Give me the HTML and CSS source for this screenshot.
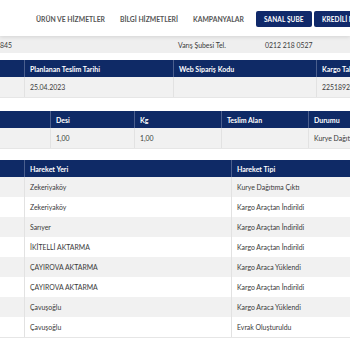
FILE: index.html
```html
<!DOCTYPE html>
<html lang="tr">

<head>
    <meta charset="UTF-8">
    <meta name="viewport" content="width=device-width, initial-scale=1.0">
    <title>Kargo Takip</title>
    <link rel="stylesheet" href="styles.css">
</head>

<body>
    <header class="topbar">
        <nav class="menu">
            <a href="#">ÜRÜN VE HİZMETLER</a>
            <a href="#">BİLGİ HİZMETLERİ</a>
            <a href="#">KAMPANYALAR</a>
        </nav>
        <a href="#" class="btn">SANAL ŞUBE</a>
        <a href="#" class="btn btn-wide">KREDİLİ MÜŞTERİ</a>
    </header>

    <div class="content">
        <!-- end of the branch table, scrolled past -->
        <div class="tbl info">
            <div class="row gray">
                <div class="cell clip">0212 218 4845</div>
                <div class="cell"></div>
                <div class="cell">Varış Şubesi Tel.</div>
                <div class="cell">0212 218 0527</div>
            </div>
        </div>

        <div class="tbl t1">
            <div class="row head">
                <div class="cell"></div>
                <div class="cell">Planlanan Teslim Tarihi</div>
                <div class="cell">Web Sipariş Kodu</div>
                <div class="cell">Kargo Takip No</div>
            </div>
            <div class="row gray">
                <div class="cell"></div>
                <div class="cell">25.04.2023</div>
                <div class="cell"></div>
                <div class="cell">22518920</div>
            </div>
        </div>

        <div class="tbl t2">
            <div class="row head">
                <div class="cell"></div>
                <div class="cell">Desi</div>
                <div class="cell">Kg</div>
                <div class="cell">Teslim Alan</div>
                <div class="cell">Durumu</div>
            </div>
            <div class="row gray">
                <div class="cell"></div>
                <div class="cell">1,00</div>
                <div class="cell">1,00</div>
                <div class="cell"></div>
                <div class="cell">Kurye Dağıtımda</div>
            </div>
        </div>

        <div class="tbl t3" id="moves">
            <div class="row head">
                <div class="cell"></div>
                <div class="cell">Hareket Yeri</div>
                <div class="cell">Hareket Tipi</div>
            </div>
        </div>
    </div>

    <script>
        const moves = [
            ['Zekeriyaköy', 'Kurye Dağıtıma Çıktı'],
            ['Zekeriyaköy', 'Kargo Araçtan İndirildi'],
            ['Sarıyer', 'Kargo Araçtan İndirildi'],
            ['İKİTELLİ AKTARMA', 'Kargo Araçtan İndirildi'],
            ['ÇAYIROVA AKTARMA', 'Kargo Araca Yüklendi'],
            ['ÇAYIROVA AKTARMA', 'Kargo Araçtan İndirildi'],
            ['Çavuşoğlu', 'Kargo Araca Yüklendi'],
            ['Çavuşoğlu', 'Evrak Oluşturuldu']
        ];
        const table = document.getElementById('moves');
        moves.forEach((m, i) => {
            const row = document.createElement('div');
            row.className = 'row' + (i % 2 === 0 ? ' gray' : '');
            row.innerHTML = `<div class="cell"></div><div class="cell">${m[0]}</div><div class="cell">${m[1]}</div>`;
            table.appendChild(row);
        });
    </script>
</body>

</html>
```

FILE: styles.css
```css
html,
body {
    overflow: hidden;
}

body {
    margin: 0;
    font-family: Lato, "Open Sans", sans-serif;
    background-color: #fff;
    color: #3a3a3a;
}

.topbar {
    height: 36px;
    box-sizing: border-box;
    padding-top: 2px;
    display: flex;
    align-items: center;
    padding-left: 36px;
    background-color: #fff;
    box-shadow: 0 1px 4px rgba(0, 0, 0, 0.12);
    position: relative;
    z-index: 2;
    white-space: nowrap;
}

.menu {
    display: flex;
    flex-shrink: 0;
    gap: 15px;
    margin-right: 12px;
}

.menu a {
    color: #555;
    font-size: 6.8px;
    font-weight: bold;
    text-decoration: none;
}

.btn {
    display: flex;
    flex-shrink: 0;
    align-items: center;
    justify-content: center;
    height: 16px;
    width: 56px;
    margin-right: 2px;
    border-radius: 2px;
    background-color: #10296a;
    color: #fff;
    font-size: 6.5px;
    font-weight: bold;
    letter-spacing: 0.1px;
    text-decoration: none;
}

.btn-wide {
    width: 72px;
}

.content {
    width: 440px;
}

.tbl {
    margin-bottom: 13px;
    border-bottom: 1px solid #e6e6e6;
}

.info {
    margin-bottom: 7px;
    border-bottom: none;
}

.t2 {
    margin-bottom: 11px;
}

.row {
    display: grid;
    height: 20px;
    align-items: center;
    font-size: 6.9px;
    white-space: nowrap;
}

.row.gray {
    background-color: #f1f1f1;
}

.info .row {
    height: 17px;
    grid-template-columns: 12px 161px 87px 1fr;
    background-color: #efefef;
}

.t1 .row {
    grid-template-columns: 24px 149px 143px 1fr;
}

.t2 .row {
    grid-template-columns: 50px 84px 87px 87px 1fr;
}

.t3 .row {
    grid-template-columns: 24px 207px 1fr;
}

.cell {
    height: 100%;
    display: flex;
    align-items: center;
    padding-left: 5px;
    border-left: 1px solid #e2e2e2;
    overflow: hidden;
}

.cell:first-child {
    border-left: none;
}

.info .cell {
    border-left: none;
    padding-left: 5px;
}

.info .clip {
    padding-left: 0;
    justify-content: flex-end;
}

.row.head {
    height: 17px;
    background-color: #0f2a66;
    color: #fff;
    font-size: 7px;
    font-weight: bold;
}

.row.head .cell {
    border-left-color: #4b5f8e;
}
```
